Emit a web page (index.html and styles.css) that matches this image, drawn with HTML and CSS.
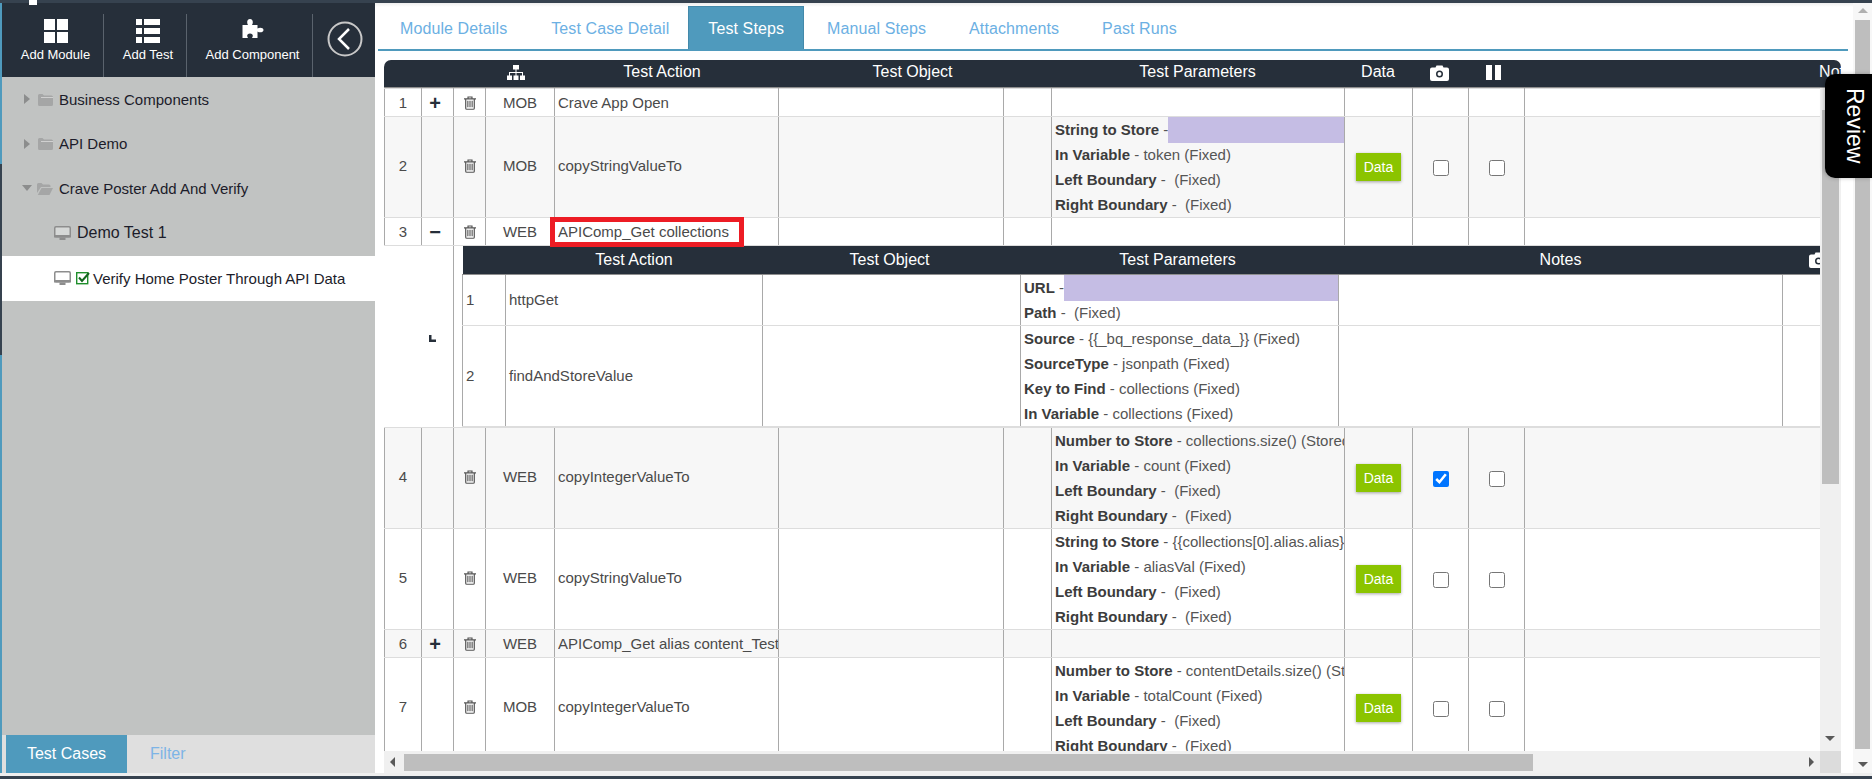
FILE: index.html
```html
<!DOCTYPE html>
<html lang="en">
<head>
    <meta charset="UTF-8">
    <title>Test Steps</title>
    <link rel="stylesheet" href="styles.css">
</head>
<body>
    <svg class="defs" width="0" height="0">
        <symbol id="trash" viewBox="0 0 14 16">
            <path d="M4.700 3V1h4.600v2M0 3.200h14M2 3v11a1.300 1.300 0 0 0 1.300 1.300h7.400A1.300 1.300 0 0 0 12 14V3" fill="none" stroke="currentColor" stroke-width="1.400"/>
            <path d="M4.500 5.500v7.500M7 5.500v7.500M9.500 5.500v7.500" stroke="currentColor" stroke-width="1.300"/>
        </symbol>
        <symbol id="camera" viewBox="0 0 19 16">
            <path fill-rule="evenodd" d="M2 2.500h3.500L6.500.5h6l1 2H17a2 2 0 0 1 2 2V14a2 2 0 0 1-2 2H2a2 2 0 0 1-2-2V4.500a2 2 0 0 1 2-2zM9.500 5.500a3.500 3.500 0 1 0 0 7 3.500 3.500 0 0 0 0-7zM9.500 7a2 2 0 1 1 0 4 2 2 0 0 1 0-4z" fill="#fff"/>
        </symbol>
        <symbol id="folder" viewBox="0 0 15 13">
            <path d="M0 2.500A1.500 1.500 0 0 1 1.500 1h3L6 2.500h7.500A1.500 1.500 0 0 1 15 4v7.500a1.500 1.500 0 0 1-1.500 1.500h-12A1.500 1.500 0 0 1 0 11.500z" fill="#a5a6a6"/>
            <rect x="3" y="4" width="12" height="1" fill="#d0d0d0"/>
        </symbol>
        <symbol id="folder-open" viewBox="0 0 16 13">
            <path d="M0 2.500A1.500 1.500 0 0 1 1.500 1h3L6 2.500h6A1.500 1.500 0 0 1 13.500 4v1H4L0 11z" fill="#a5a6a6"/>
            <path d="M4.500 6H16l-3.500 7H.8z" fill="#a5a6a6"/>
        </symbol>
        <symbol id="monitor" viewBox="0 0 17 14">
            <rect x=".75" y=".75" width="15.500" height="10" rx="1.200" fill="#fff" fill-opacity=".35" stroke="#8d8d8d" stroke-width="1.500"/>
            <rect x="0" y="9" width="17" height="2.500" fill="#8d8d8d"/>
            <rect x="5.500" y="11.500" width="6" height="2.500" fill="#8d8d8d"/>
        </symbol>
    </svg>

    <div class="topbar"><span class="topbar-mark"></span></div>

    <div class="app">
        <aside class="sidebar">
            <div class="toolbar">
                <div class="tool tool-module">
                    <svg width="24" height="24" viewBox="0 0 24 24" fill="#fff"><rect width="11" height="11"/><rect x="13" width="11" height="11"/><rect y="13" width="11" height="11"/><rect x="13" y="13" width="11" height="11"/></svg>
                    <span>Add Module</span>
                </div>
                <div class="tool tool-test">
                    <svg width="24" height="24" viewBox="0 0 24 24" fill="#fff"><rect width="6" height="6"/><rect x="8" width="16" height="6"/><rect y="9" width="6" height="6"/><rect x="8" y="9" width="16" height="6"/><rect y="18" width="6" height="6"/><rect x="8" y="18" width="16" height="6"/></svg>
                    <span>Add Test</span>
                </div>
                <div class="tool tool-component">
                    <svg width="24" height="24" viewBox="-1.500 0 24 24" fill="#fff"><path d="M0 6H5.500C4 4 4.500 0 7.500 0C10.500 0 11 4 9.500 6H15V9.500C17 8 21 8.500 21 11C21 13.500 17 14 15 12.500V19H9.500C11 17 10.500 14.500 7.500 14.500C4.500 14.500 4 17 5.500 19H0Z"/></svg>
                    <span>Add Component</span>
                </div>
                <div class="tool-back">
                    <svg width="36" height="36" viewBox="0 0 36 36" fill="none"><circle cx="18" cy="18" r="16.500" stroke="#c8c8c8" stroke-width="2"/><path d="M22 8 L12 18 L22 28" stroke="#fff" stroke-width="2.500"/></svg>
                </div>
            </div>

            <div class="tree">
                <div class="tree-row row-folder"><span class="arrow-right"></span><svg class="ico-folder" width="15" height="13"><use href="#folder"/></svg>Business Components</div>
                <div class="tree-row row-folder"><span class="arrow-right"></span><svg class="ico-folder" width="15" height="13"><use href="#folder"/></svg>API Demo</div>
                <div class="tree-row row-folder"><span class="arrow-down"></span><svg class="ico-folder" width="16" height="13"><use href="#folder-open"/></svg>Crave Poster Add And Verify</div>
                <div class="tree-row row-test row-demo"><svg class="ico-monitor" width="17" height="14"><use href="#monitor"/></svg>Demo Test 1</div>
                <div class="tree-row row-test row-active">
                    <svg class="ico-monitor" width="17" height="14"><use href="#monitor"/></svg>
                    <svg class="ico-check" width="14" height="13" viewBox="0 0 14 13"><rect x=".7" y=".7" width="11" height="11" fill="none" stroke="#1f8f2c" stroke-width="1.400"/><path d="M3 5.500l3 3.500 7-8" fill="none" stroke="#14671f" stroke-width="2"/></svg>
                    Verify Home Poster Through API Data
                </div>
            </div>

            <div class="side-tabs">
                <a class="side-tab side-tab-active">Test Cases</a>
                <a class="side-tab">Filter</a>
            </div>
        </aside>

        <main class="main">
            <div class="content">
                <nav class="tabs">
                    <a class="tab">Module Details</a>
                    <a class="tab tab-case">Test Case Detail</a>
                    <a class="tab tab-active">Test Steps</a>
                    <a class="tab">Manual Steps</a>
                    <a class="tab">Attachments</a>
                    <a class="tab">Past Runs</a>
                </nav>

                <div class="grid">
                    <div class="grid-head">
                        <table class="head-table">
                            <colgroup>
                                <col class="c-num"><col class="c-exp"><col class="c-del"><col class="c-type"><col class="c-action"><col class="c-headobj"><col class="c-params"><col class="c-data"><col class="c-shot"><col class="c-pause"><col class="c-headnotes">
                            </colgroup>
                            <tr>
                                <th></th><th></th><th></th>
                                <th><svg class="ico-sitemap" width="18" height="15" viewBox="0 0 18 15" fill="#fff"><rect x="6" width="6" height="4.500"/><rect y="10.500" width="5" height="4.500"/><rect x="6.500" y="10.500" width="5" height="4.500"/><rect x="13" y="10.500" width="5" height="4.500"/><path d="M8.500 4h1v3H16v4h-1V8H9.500v3h-1V8H3v3H2V7h6.500z"/></svg></th>
                                <th class="th-action">Test Action</th>
                                <th class="th-object">Test Object</th>
                                <th>Test Parameters</th>
                                <th>Data</th>
                                <th><svg class="ico-head" width="19" height="16"><use href="#camera"/></svg></th>
                                <th><svg class="ico-head" width="15" height="15" viewBox="0 0 15 15" fill="#fff"><rect width="6" height="15"/><rect x="9" width="6" height="15"/></svg></th>
                                <th>Notes</th>
                            </tr>
                        </table>
                    </div>

                    <div class="grid-middle">
                        <div class="grid-body">
                            <table class="steps">
                                <colgroup>
                                    <col class="c-num"><col class="c-exp"><col class="c-del"><col class="c-type"><col class="c-action"><col class="c-obj"><col class="c-gap"><col class="c-params"><col class="c-data"><col class="c-shot"><col class="c-pause"><col class="c-notes">
                                </colgroup>
                                <tr class="row-s">
                                    <td class="center">1</td><td class="center exp">+</td>
                                    <td class="center"><svg class="ico-trash" width="12" height="14"><use href="#trash"/></svg></td>
                                    <td class="center">MOB</td><td><div class="clip">Crave App Open</div></td>
                                    <td></td><td></td><td></td><td></td><td></td><td></td><td></td>
                                </tr>
                                <tr class="row-l alt">
                                    <td class="center">2</td><td></td>
                                    <td class="center"><svg class="ico-trash" width="12" height="14"><use href="#trash"/></svg></td>
                                    <td class="center">MOB</td><td><div class="clip">copyStringValueTo</div></td>
                                    <td></td><td></td>
                                    <td class="params">
                                        <div class="param"><b>String to Store</b> -<span class="redact"></span></div>
                                        <div class="param"><b>In Variable</b> - token (Fixed)</div>
                                        <div class="param"><b>Left Boundary</b> - &nbsp;(Fixed)</div>
                                        <div class="param"><b>Right Boundary</b> - &nbsp;(Fixed)</div>
                                    </td>
                                    <td class="center"><button class="btn-data">Data</button></td>
                                    <td class="center"><input type="checkbox"></td>
                                    <td class="center"><input type="checkbox"></td>
                                    <td></td>
                                </tr>
                                <tr class="row-s">
                                    <td class="center">3</td><td class="center exp">&minus;</td>
                                    <td class="center"><svg class="ico-trash" width="12" height="14"><use href="#trash"/></svg></td>
                                    <td class="center">WEB</td>
                                    <td class="has-mark"><div class="clip">APIComp_Get collections</div><span class="red-mark"></span></td>
                                    <td></td><td></td><td></td><td></td><td></td><td></td><td></td>
                                </tr>
                                <tr class="row-sub">
                                    <td colspan="2" class="level-cell">
                                        <svg class="ico-level" width="7" height="7" viewBox="0 0 7 7" fill="#262f3a"><path d="M0 0h2.500v4.500H7V7H0z"/></svg>
                                    </td>
                                    <td colspan="10" class="sub-cell">
                                        <table class="sub">
                                            <colgroup>
                                                <col class="s-num"><col class="s-action"><col class="s-obj"><col class="s-params"><col class="s-notes"><col class="s-shot">
                                            </colgroup>
                                            <tr class="sub-head">
                                                <th></th><th>Test Action</th><th class="th-sub">Test Object</th><th class="th-sub">Test Parameters</th><th>Notes</th>
                                                <th class="th-shot"><svg width="19" height="16"><use href="#camera"/></svg></th>
                                            </tr>
                                            <tr class="sub-one">
                                                <td class="pad">1</td><td class="pad">httpGet</td><td></td>
                                                <td class="params">
                                                    <div class="param"><b>URL</b> -<span class="redact"></span></div>
                                                    <div class="param"><b>Path</b> - &nbsp;(Fixed)</div>
                                                </td>
                                                <td></td><td></td>
                                            </tr>
                                            <tr class="sub-two">
                                                <td class="pad">2</td><td class="pad">findAndStoreValue</td><td></td>
                                                <td class="params">
                                                    <div class="param"><b>Source</b> - {{_bq_response_data_}} (Fixed)</div>
                                                    <div class="param"><b>SourceType</b> - jsonpath (Fixed)</div>
                                                    <div class="param"><b>Key to Find</b> - collections (Fixed)</div>
                                                    <div class="param"><b>In Variable</b> - collections (Fixed)</div>
                                                </td>
                                                <td></td><td></td>
                                            </tr>
                                        </table>
                                    </td>
                                </tr>
                                <tr class="row-l alt row-after">
                                    <td class="center">4</td><td></td>
                                    <td class="center"><svg class="ico-trash" width="12" height="14"><use href="#trash"/></svg></td>
                                    <td class="center">WEB</td><td><div class="clip">copyIntegerValueTo</div></td>
                                    <td></td><td></td>
                                    <td class="params">
                                        <div class="param"><b>Number to Store</b> - collections.size() (Stored)</div>
                                        <div class="param"><b>In Variable</b> - count (Fixed)</div>
                                        <div class="param"><b>Left Boundary</b> - &nbsp;(Fixed)</div>
                                        <div class="param"><b>Right Boundary</b> - &nbsp;(Fixed)</div>
                                    </td>
                                    <td class="center"><button class="btn-data">Data</button></td>
                                    <td class="center"><input type="checkbox" checked></td>
                                    <td class="center"><input type="checkbox"></td>
                                    <td></td>
                                </tr>
                                <tr class="row-l">
                                    <td class="center">5</td><td></td>
                                    <td class="center"><svg class="ico-trash" width="12" height="14"><use href="#trash"/></svg></td>
                                    <td class="center">WEB</td><td><div class="clip">copyStringValueTo</div></td>
                                    <td></td><td></td>
                                    <td class="params">
                                        <div class="param"><b>String to Store</b> - {{collections[0].alias.alias}} (Stored)</div>
                                        <div class="param"><b>In Variable</b> - aliasVal (Fixed)</div>
                                        <div class="param"><b>Left Boundary</b> - &nbsp;(Fixed)</div>
                                        <div class="param"><b>Right Boundary</b> - &nbsp;(Fixed)</div>
                                    </td>
                                    <td class="center"><button class="btn-data">Data</button></td>
                                    <td class="center"><input type="checkbox"></td>
                                    <td class="center"><input type="checkbox"></td>
                                    <td></td>
                                </tr>
                                <tr class="row-s alt">
                                    <td class="center">6</td><td class="center exp">+</td>
                                    <td class="center"><svg class="ico-trash" width="12" height="14"><use href="#trash"/></svg></td>
                                    <td class="center">WEB</td><td><div class="clip">APIComp_Get alias content_Test</div></td>
                                    <td></td><td></td><td></td><td></td><td></td><td></td><td></td>
                                </tr>
                                <tr class="row-l">
                                    <td class="center">7</td><td></td>
                                    <td class="center"><svg class="ico-trash" width="12" height="14"><use href="#trash"/></svg></td>
                                    <td class="center">MOB</td><td><div class="clip">copyIntegerValueTo</div></td>
                                    <td></td><td></td>
                                    <td class="params">
                                        <div class="param"><b>Number to Store</b> - contentDetails.size() (Stored)</div>
                                        <div class="param"><b>In Variable</b> - totalCount (Fixed)</div>
                                        <div class="param"><b>Left Boundary</b> - &nbsp;(Fixed)</div>
                                        <div class="param"><b>Right Boundary</b> - &nbsp;(Fixed)</div>
                                    </td>
                                    <td class="center"><button class="btn-data">Data</button></td>
                                    <td class="center"><input type="checkbox"></td>
                                    <td class="center"><input type="checkbox"></td>
                                    <td></td>
                                </tr>
                            </table>
                        </div>
                        <div class="vbar">
                            <div class="vbar-thumb"></div>
                            <span class="arrow-sb-down"></span>
                        </div>
                    </div>

                    <div class="hbar">
                        <div class="hbar-track">
                            <span class="arrow-sb-left"></span>
                            <div class="hbar-thumb"></div>
                            <span class="arrow-sb-right"></span>
                        </div>
                        <div class="hbar-corner"></div>
                    </div>
                </div>
            </div>

            <div class="page-bar">
                <span class="arrow-sb-up"></span>
                <div class="page-thumb"></div>
                <span class="arrow-sb-down"></span>
            </div>
        </main>
    </div>

    <div class="bottombar"></div>

    <div class="review">Review</div>
</body>
</html>
```

FILE: styles.css
```css
* {
    box-sizing: border-box;
}
html, body {
    margin: 0;
    height: 779px;
    overflow: hidden;
}
body {
    display: flex;
    flex-direction: column;
    font-family: "Liberation Sans", Arial, sans-serif;
    font-size: 15px;
    color: #4a4a4a;
    background: #fff;
}
.defs {
    position: absolute;
}

.topbar {
    height: 3px;
    flex: none;
    background: #36424f;
    position: relative;
}
.topbar-mark {
    position: absolute;
    left: 29px;
    top: 0;
    width: 8px;
    height: 5px;
    background: #fff;
    z-index: 2;
}
.app {
    flex: 1;
    min-height: 0;
    display: flex;
}
.bottombar {
    flex: none;
    height: 6px;
    background: linear-gradient(#eeeeee 0 3px, #36424f 3px);
}

/* left panel */
.sidebar {
    width: 375px;
    flex: none;
    display: flex;
    flex-direction: column;
    border-left: 2px solid #4f9abd;
    border-image: linear-gradient(#4f9abd 162px, #36424f 162px, #36424f 352px, #4f9abd 352px) 1;
    background: #c1c3c2;
}
.toolbar {
    height: 74px;
    flex: none;
    display: flex;
    background: #262f3a;
    padding-top: 11px;
}
.tool {
    display: flex;
    flex-direction: column;
    align-items: center;
    gap: 4px;
    padding: 5px 0 0 6px;
    color: #fff;
    font-size: 13px;
    border-right: 1px solid #5a636d;
}
.tool-module {
    width: 102px;
}
.tool-test {
    width: 83px;
}
.tool-component {
    width: 126px;
}
.tool-back {
    padding: 7px 0 0 14px;
}
.tree {
    flex: 1;
    color: #1c1c2a;
}
.tree-row {
    display: flex;
    align-items: center;
}
.row-folder {
    height: 44.500px;
    padding-left: 22px;
}
.row-test {
    padding-left: 52px;
}
.row-demo {
    height: 45px;
    font-size: 16px;
    gap: 6px;
}
.row-active {
    height: 45px;
    background: #fff;
}
.arrow-right {
    width: 0;
    height: 0;
    border-left: 6px solid #8c8d8d;
    border-top: 5px solid transparent;
    border-bottom: 5px solid transparent;
    margin-right: 8px;
}
.arrow-down {
    width: 0;
    height: 0;
    border-top: 6px solid #8c8d8d;
    border-left: 5px solid transparent;
    border-right: 5px solid transparent;
    margin: 0 5px 0 -2px;
}
.ico-folder {
    margin-right: 6px;
}
.ico-monitor {
    flex: none;
}
.ico-check {
    margin: 0 3px 0 5px;
    flex: none;
}
.side-tabs {
    height: 38px;
    flex: none;
    display: flex;
    background: #dfdfdf;
    padding-left: 4px;
    font-size: 16px;
}
.side-tab {
    padding: 0 23px;
    line-height: 38px;
    color: #7db4e6;
}
.side-tab-active {
    width: 121px;
    padding: 0;
    text-align: center;
    background: #4f9abd;
    color: #fff;
}

/* main area */
.main {
    flex: 1;
    min-width: 0;
    display: flex;
    background: linear-gradient(#eeeeee, #fff 4px);
}
.content {
    width: 1478px;
    flex: none;
    padding: 3px 0 0 3px;
}
.tabs {
    height: 45px;
    width: 1470px;
    display: flex;
    border-bottom: 2px solid #4f9abd;
    font-size: 16px;
    letter-spacing: .1px;
}
.tab {
    padding: 0 20px;
    margin: 0 1.500px;
    line-height: 45px;
    color: #6cb0e3;
    white-space: nowrap;
}
.tab:first-child {
    margin-left: 2px;
    padding-right: 21px;
}
.tab-case {
    padding-right: 16px;
}
.tab-active {
    background: #4f9abd;
    color: #fff;
    border: 1px solid #4389aa;
    border-bottom: 0;
    padding: 0 19px;
    line-height: 43px;
}

.grid {
    margin: 9px 0 0 6px;
    width: 1457px;
    height: 713px;
    display: flex;
    flex-direction: column;
}
.grid-head {
    height: 28px;
    flex: none;
    background: #262f3a;
    border-radius: 7px 7px 0 0;
    overflow: hidden;
    border-bottom: 1px solid #8e8e8e;
}
table {
    border-collapse: collapse;
    table-layout: fixed;
}
.head-table {
    width: 1772px;
    color: #fff;
    font-size: 16px;
}
.head-table th {
    height: 27px;
    padding: 0 0 3px;
    font-weight: normal;
    vertical-align: middle;
}
.head-table .th-action {
    padding-right: 8px;
}
.head-table .th-object {
    padding-right: 4px;
}
.head-table svg {
    display: block;
    margin: 1px auto 0;
}
.head-table .ico-sitemap {
    margin-left: 22px;
}
.head-table .ico-head {
    margin-left: 18px;
}
.c-num { width: 37px; }
.c-exp { width: 32px; }
.c-del { width: 32px; }
.c-type { width: 69px; }
.c-action { width: 224px; }
.c-obj { width: 225px; }
.c-gap { width: 48px; }
.c-headobj { width: 273px; }
.c-params { width: 293px; }
.c-data { width: 68px; }
.c-shot { width: 56px; }
.c-pause { width: 56px; }
.c-notes { width: 296px; }
.c-headnotes { width: 632px; }

.grid-middle {
    flex: 1;
    min-height: 0;
    display: flex;
}
.grid-body {
    width: 1436px;
    flex: none;
    overflow: hidden;
}
.steps {
    width: 1436px;
}
.steps > tbody > tr > td {
    border-left: 1px solid #a9a9a9;
    border-right: 1px solid #a9a9a9;
    border-top: 1px solid #dddddd;
    border-bottom: 1px solid #dddddd;
    padding: 0 3px;
    vertical-align: middle;
}
.steps > tbody > tr.row-l > td {
    padding-bottom: 3px;
}
.steps > tbody > tr.row-l > td.params {
    padding-bottom: 0;
}
.row-s {
    height: 28px;
}
.row-l {
    height: 101px;
}
.alt {
    background: #f7f7f7;
}
.center {
    text-align: center;
}
.clip {
    overflow: hidden;
    white-space: nowrap;
    margin-right: -3px;
}
.steps > tbody > tr > td.exp {
    font-size: 20px;
    font-weight: bold;
    line-height: 20px;
    color: #262f3a;
    padding-right: 8px;
}
.ico-trash {
    display: block;
    margin: 0 auto;
    color: #555;
}
.has-mark {
    position: relative;
}
.red-mark {
    position: absolute;
    left: -5px;
    top: -1px;
    width: 194px;
    height: 30px;
    border: 5px solid #ed1c24;
}
.params {
    color: #555;
    overflow: hidden;
}
.params b {
    color: #3c3c3c;
}
.param {
    height: 25px;
    line-height: 25px;
    white-space: nowrap;
}
.redact {
    display: inline-block;
    width: 300px;
    height: 26px;
    background: #c5bde4;
    vertical-align: top;
}
.btn-data {
    width: 45px;
    height: 28px;
    margin-top: 3px;
    padding: 0;
    border: 0;
    background: #8bc400;
    color: #fff;
    font-family: inherit;
    font-size: 14px;
    box-shadow: 0 1px 3px rgba(0,0,0,.35);
}
input[type="checkbox"] {
    width: 16px;
    height: 16px;
    margin: 4px 0 0;
    vertical-align: middle;
}

/* nested component steps */
.row-sub {
    height: 182px;
}
.steps > tbody > tr > td.level-cell {
    border-left: 0;
    padding: 89px 17px 0 0;
    vertical-align: top;
    background: #fff;
}
.ico-level {
    display: block;
    margin-left: auto;
}
.steps > tbody > tr > td.sub-cell {
    padding: 0 0 0 8px;
    vertical-align: top;
    border-top: 0;
    border-right: 0;
}
.sub {
    width: 1500px;
}
.s-num { width: 43px; }
.s-action { width: 257px; }
.s-obj { width: 258px; }
.s-params { width: 318px; }
.s-notes { width: 444px; }
.s-shot { width: 180px; }
.sub-head {
    height: 28px;
    background: #262f3a;
    color: #fff;
    font-size: 16px;
}
.sub-head th {
    font-weight: normal;
    padding: 0;
    border-bottom: 1px solid #8e8e8e;
}
.sub-head .th-sub {
    padding-right: 4px;
}
.sub-head svg {
    display: block;
}
.sub-head .th-shot svg {
    margin-left: 26px;
}
.sub td {
    border: 1px solid #a9a9a9;
    border-top-color: #dddddd;
    border-bottom-color: #dddddd;
    padding: 0 3px;
    overflow: hidden;
}
.sub-one {
    height: 51px;
}
.sub-two {
    height: 101px;
}
.row-after > td {
    border-top-color: #a9a9a9 !important;
}

/* scrollbars */
.vbar {
    width: 21px;
    flex: none;
    position: relative;
    background: #f0f0f0;
}
.vbar-thumb {
    margin: 22px 2px 0;
    height: 374px;
    background: #bebebe;
}
.vbar .arrow-sb-down {
    position: absolute;
    right: 6px;
    bottom: 10px;
}
.hbar {
    height: 22px;
    flex: none;
    display: flex;
}
.hbar-track {
    width: 1436px;
    flex: none;
    display: flex;
    align-items: center;
    background: #f0f0f0;
    padding: 0 6px;
}
.hbar-thumb {
    width: 1129px;
    height: 17px;
    margin-left: 9px;
    background: #bebebe;
}
.arrow-sb-left {
    width: 0;
    height: 0;
    border-right: 5px solid #595959;
    border-top: 5px solid transparent;
    border-bottom: 5px solid transparent;
}
.arrow-sb-right {
    width: 0;
    height: 0;
    margin-left: auto;
    border-left: 5px solid #595959;
    border-top: 5px solid transparent;
    border-bottom: 5px solid transparent;
}
.hbar-corner {
    flex: 1;
    background: #dcdcdc;
}
.arrow-sb-down {
    width: 0;
    height: 0;
    border-top: 5px solid #595959;
    border-left: 5px solid transparent;
    border-right: 5px solid transparent;
}
.arrow-sb-up {
    width: 0;
    height: 0;
    border-bottom: 5px solid #b0b0b0;
    border-left: 5px solid transparent;
    border-right: 5px solid transparent;
}
.page-bar {
    width: 19px;
    margin-left: auto;
    flex: none;
    display: flex;
    flex-direction: column;
    align-items: center;
    background: #f7f7f7;
    padding-top: 5px;
}
.page-thumb {
    width: 15px;
    height: 729px;
    margin: 7px 0 13px;
    background: #bebebe;
}

.review {
    position: absolute;
    right: 0;
    top: 74px;
    width: 47px;
    height: 104px;
    background: #000;
    color: #fff;
    border-radius: 10px 0 0 10px;
    font-size: 23px;
    writing-mode: vertical-rl;
    text-align: center;
    line-height: 35px;
    box-shadow: -1px 0 4px rgba(0,0,0,.25);
}
```
